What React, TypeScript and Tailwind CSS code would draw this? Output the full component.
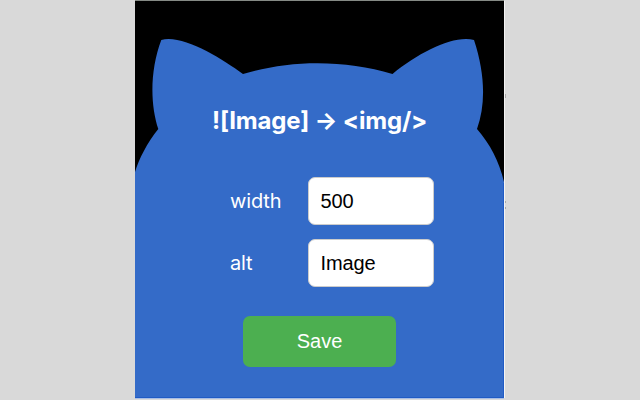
import React from "react";

function CatHead() {
  return (
    <svg
      className="absolute inset-0 h-[397px] w-[369px]"
      viewBox="135 1 369 397"
      aria-hidden="true"
    >
      <path
        fill="#346bc8"
        d="M135 172C139 159 147 143 158.300 129C150 104 150 70 161.300 40C182 34 221 58 243 74C290 59.500 345 59.500 392.500 74C420 52 453 35 474 40C485 73 486 104 477 129C490 144 499 161 504 182V398H135Z"
      />
      <path d="M503.500 183V397.500H135" fill="none" stroke="#205bc5" strokeWidth="1" />
    </svg>
  );
}

function Field({ label, value }: { label: string; value: string }) {
  return (
    <label className="flex items-center">
      <span className="w-[78px] text-[20px] leading-6 tracking-[-0.15px]">{label}</span>
      <input
        className="h-12 w-[126px] rounded-[7px] border border-[#cccccc] bg-white px-[11.5px] font-['Liberation_Sans',Arial,sans-serif] text-[20px] tracking-[-0.1px] text-black outline-none"
        defaultValue={value}
      />
    </label>
  );
}

export default function App() {
  return (
    <div className="flex h-[400px] w-[640px] bg-[#d9d9d9] pl-[135px] pt-px font-['Inter',sans-serif] text-white">
      <main className="relative h-[397px] w-[369px] bg-black shadow-[1px_0_0_#f4f4f4,0_1px_0_#a9bee4,0_-1px_0_#858a85]">
        <CatHead />
        <div className="relative pl-[77px] pt-[104px]">
          <h1 className="whitespace-nowrap text-[24px] font-bold leading-8 tracking-[-0.17px]">
            ![Image] → &lt;img/&gt;
          </h1>
          <form className="pl-[18px] pt-10" onSubmit={(e) => e.preventDefault()}>
            <div className="flex flex-col gap-3.5">
              <Field label="width" value="500" />
              <Field label="alt" value="Image" />
            </div>
            <button className="ml-[13px] mt-[29px] h-[51px] w-[153px] rounded-[7px] bg-[#4caf50] pb-0.5 font-['Liberation_Sans',Arial,sans-serif] text-[20px]">
              Save
            </button>
          </form>
        </div>
      </main>
      <div className="flex w-0.5 flex-col pt-[93px]">
        <span className="ml-px h-1 w-px bg-[#a8a8a8]" />
        <span className="ml-px mt-[103px] h-2 w-px border-y-2 border-[#a8a8a8]" />
      </div>
    </div>
  );
}
